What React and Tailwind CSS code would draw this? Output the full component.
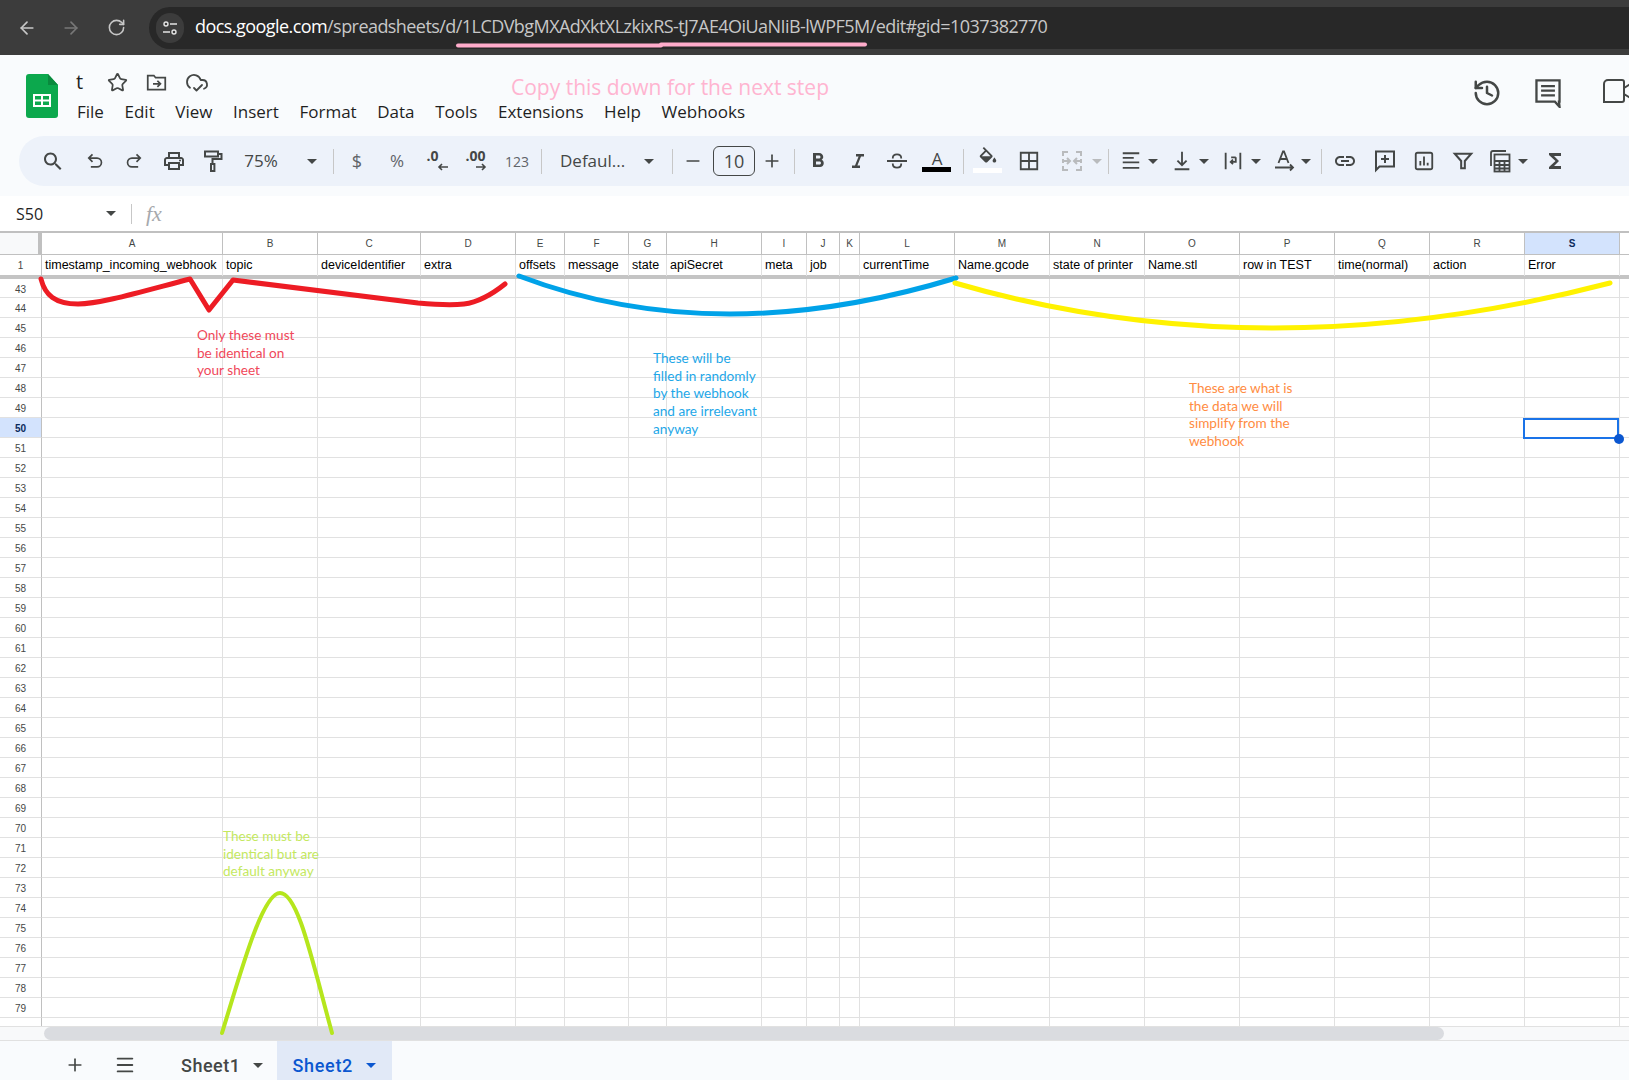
import { ArrowLeft, ArrowRight, RotateCw, Star, CloudCheck, History, Plus, Minus, Menu } from 'lucide-react';

const COLS = ['A', 'B', 'C', 'D', 'E', 'F', 'G', 'H', 'I', 'J', 'K', 'L', 'M', 'N', 'O', 'P', 'Q', 'R', 'S'];
const HEADS = ['timestamp_incoming_webhook', 'topic', 'deviceIdentifier', 'extra', 'offsets', 'message', 'state', 'apiSecret', 'meta', 'job', '', 'currentTime', 'Name.gcode', 'state of printer', 'Name.stl', 'row in TEST', 'time(normal)', 'action', 'Error'];
const ROWS = Array.from({ length: 38 }, (_, i) => i + 43);
const MENU = ['File', 'Edit', 'View', 'Insert', 'Format', 'Data', 'Tools', 'Extensions', 'Help', 'Webhooks'];

// column edges come straight off the sheet, last track is the cut-off column T
const GRID = 'grid grid-cols-[42px_181px_95px_103px_95px_49px_64px_38px_95px_45px_33px_20px_95px_95px_95px_95px_95px_95px_95px_95px_9px]';
const ICON = '#444746';

function Glyph({ children, size = 24, vb = '0 0 24 24', color = ICON }) {
  return (
    <svg width={size} height={size} viewBox={vb} fill={color}>
      {children}
    </svg>
  );
}

function Line({ children, size = 24, width = 2, color = ICON }) {
  return (
    <svg width={size} height={size} viewBox="0 0 24 24" fill="none" stroke={color} strokeWidth={width}>
      {children}
    </svg>
  );
}

function Caret({ className = '', color = '#444746' }) {
  return (
    <div className={`flex w-[10px] shrink-0 justify-center ${className}`}>
      <svg width="10" height="5" viewBox="0 0 10 5" fill={color}>
        <path d="M0 0h10L5 5z" />
      </svg>
    </div>
  );
}

function Sep({ className = '' }) {
  return <div className={`h-[25px] w-px shrink-0 bg-[#c7c7c7] ${className}`} />;
}

function Box({ children, className = '' }) {
  return <div className={`flex h-6 w-6 shrink-0 items-center justify-center ${className}`}>{children}</div>;
}

function Toolbar() {
  return (
    <div className="ml-[19px] mt-[9px] flex h-[50px] items-center rounded-l-[25px] bg-[#edf2fa] pl-[22px] text-[#444746]">
      <Box>
        <Glyph size={25}>
          <path d="M15.5 14h-.79l-.28-.27C15.41 12.59 16 11.11 16 9.5 16 5.91 13.09 3 9.5 3S3 5.91 3 9.5 5.91 16 9.5 16c1.61 0 3.09-.59 4.23-1.57l.27.28v.79l5 4.99L20.49 19l-4.99-5zm-6 0C7.01 14 5 11.99 5 9.5S7.01 5 9.5 5 14 7.01 14 9.5 11.99 14 9.5 14z" />
        </Glyph>
      </Box>
      <Box className="ml-[18px]">
        <Line size={20}>
          <path d="M9 4 4.5 8.5 9 13M5 8.5h9.5a4.5 4.5 0 0 1 0 10.5H7" />
        </Line>
      </Box>
      <Box className="ml-[15px]">
        <Line size={20}>
          <path d="M15 4l4.5 4.5L15 13M19 8.5H9.5a5 5 0 0 0 0 10.5H17" />
        </Line>
      </Box>
      <Box className="ml-[16px]">
        <Glyph size={24}>
          <path d="M19 8h-1V3H6v5H5c-1.66 0-3 1.34-3 3v6h4v4h12v-4h4v-6c0-1.66-1.34-3-3-3zM8 5h8v3H8V5zm8 12v2H8v-4h8v2zm2-2v-2H6v2H4v-4c0-.55.45-1 1-1h14c.55 0 1 .45 1 1v4h-2z" />
          <circle cx="18" cy="11.5" r="1" />
        </Glyph>
      </Box>
      <Box className="ml-[15px]">
        <Line size={24}>
          <path d="M4 2.5h13v5H4zM17 5h3.5v5H11.5v5" />
          <rect x="10" y="15" width="3.4" height="7" />
        </Line>
      </Box>
      <div className="ml-[14px] w-[44px] shrink-0 text-center text-[17px] text-[#444746]">75%</div>
      <Caret className="ml-[24px]" />
      <Sep className="ml-[16px]" />
      <Box className="ml-[11px] text-[18px] text-[#5f6368]">$</Box>
      <Box className="ml-[16px] text-[17px] text-[#5f6368]">%</Box>
      <Box className="ml-[16px]">
        <div className="flex flex-col items-start">
          <span className="mt-[-4px] text-[14px] font-bold leading-[15px] text-[#444746]">.0</span>
          <svg className="ml-[10px]" width="11" height="8" viewBox="0 0 11 8" fill="none" stroke={ICON} strokeWidth="1.6">
            <path d="M11 4H2M5 1 2 4l3 3" />
          </svg>
        </div>
      </Box>
      <Box className="ml-[15px]">
        <div className="flex flex-col items-start">
          <span className="mt-[-4px] text-[14px] font-bold leading-[15px] text-[#444746]">.00</span>
          <svg className="ml-[10px]" width="11" height="8" viewBox="0 0 11 8" fill="none" stroke={ICON} strokeWidth="1.6">
            <path d="M0 4h9M6 1l3 3-3 3" />
          </svg>
        </div>
      </Box>
      <Box className="ml-[17px] text-[14px] text-[#5f6368]">123</Box>
      <Sep className="ml-[12px]" />
      <div className="ml-[18px] w-[68px] shrink-0 whitespace-nowrap text-[17px] text-[#444746]">Defaul...</div>
      <Caret className="ml-[16px]" />
      <Sep className="ml-[18px]" />
      <Box className="ml-[8px]">
        <Minus size={20} strokeWidth={2} color={ICON} />
      </Box>
      <div className="ml-[8px] flex h-[30px] w-[42px] shrink-0 items-center justify-center rounded-[6px] border border-[#444746] text-[18px] text-[#444746]">10</div>
      <Box className="ml-[5px]">
        <Plus size={20} strokeWidth={2} color={ICON} />
      </Box>
      <Sep className="ml-[10px]" />
      <Box className="ml-[11px]">
        <Glyph size={24}>
          <path d="M15.6 10.79c.97-.67 1.65-1.77 1.65-2.79 0-2.26-1.75-4-4-4H7v14h7.04c2.09 0 3.71-1.7 3.71-3.79 0-1.52-.86-2.82-2.15-3.42zM10 6.5h3c.83 0 1.5.67 1.5 1.5s-.67 1.5-1.5 1.5h-3v-3zm3.5 9H10v-3h3.5c.83 0 1.5.67 1.5 1.5s-.67 1.5-1.5 1.5z" />
        </Glyph>
      </Box>
      <Box className="ml-[16px]">
        <Glyph size={24}>
          <path d="M10 5v2.4h2.6l-3.6 9.2H6V19h8v-2.4h-2.6l3.6-9.2H18V5z" />
        </Glyph>
      </Box>
      <Box className="ml-[15px]">
        <Line size={24} width={1.8}>
          <path d="M2 12h20M7.8 9.5V9c0-2.5 2-3.6 4.2-3.6s4.2 1.1 4.2 3.6v.5M7.8 14.5v.5c0 2.5 2 3.6 4.2 3.6s4.2-1.1 4.2-3.6v-.5" />
        </Line>
      </Box>
      <Box className="relative ml-[16px]">
        <span className="mt-[-5px] text-[17px] leading-none text-[#444746]">A</span>
        <div className="absolute left-[-3px] top-[18px] h-[5px] w-[29px] bg-black" />
      </Box>
      <Sep className="ml-[14px]" />
      <Box className="relative ml-[12px]">
        <div className="mt-[-6px]">
          <Glyph size={22}>
            <path d="M16.56 8.94 7.62 0 6.21 1.41l2.38 2.38-5.15 5.15c-.59.59-.59 1.54 0 2.12l5.5 5.5c.59.59 1.53.59 2.12 0l5.5-5.5c.59-.58.59-1.53 0-2.12z" />
            <path d="M10 5.21 5.21 10h9.58z" fill="#edf2fa" />
            <path d="M19 11.5s-2 2.17-2 3.5c0 1.1.9 2 2 2s2-.9 2-2c0-1.33-2-3.5-2-3.5z" />
          </Glyph>
        </div>
        <div className="absolute left-[-3px] top-[19px] h-[5px] w-[29px] bg-white" />
      </Box>
      <Box className="ml-[17px]">
        <Line size={22}>
          <path d="M3 3h18v18H3zM12 3v18M3 12h18" />
        </Line>
      </Box>
      <Box className="ml-[19px]">
        <Line size={24} width={2} color="#b9bbbd">
          <path d="M8 3H3v4M16 3h5v4M8 21H3v-4M16 21h5v-4M3 10v4M21 10v4M2 12h7M7 9l3 3-3 3M22 12h-7M17 9l-3 3 3 3" />
        </Line>
      </Box>
      <Caret className="ml-[8px]" color="#b9bbbd" />
      <Sep className="ml-[6px]" />
      <Box className="ml-[10px]">
        <Line size={22}>
          <path d="M3 3.5h18M3 8.5h12M3 13.5h18M3 19.5h18" />
        </Line>
      </Box>
      <Caret className="ml-[5px]" />
      <Box className="ml-[12px]">
        <Line size={22}>
          <path d="M12 2v14M7 11.5l5 5 5-5M4 21h16" />
        </Line>
      </Box>
      <Caret className="ml-[5px]" />
      <Box className="ml-[12px]">
        <Line size={22}>
          <path d="M4 3v18M20 3v18M15 8h-5M15 8v5h-5M12 10.5l-2.5 2.5 2.5 2.5" />
        </Line>
      </Box>
      <Caret className="ml-[6px]" />
      <Box className="ml-[11px]">
        <Line size={24} width={1.8}>
          <path d="M6.5 14 11 2.5h1L16.5 14M8 10h7M3 18.5h18M18 15.5l3 3-3 3" />
        </Line>
      </Box>
      <Caret className="ml-[5px]" />
      <Sep className="ml-[10px]" />
      <Box className="ml-[11px]">
        <Glyph size={24}>
          <path d="M3.9 12c0-1.71 1.39-3.1 3.1-3.1h4V7H7c-2.76 0-5 2.24-5 5s2.24 5 5 5h4v-1.9H7c-1.71 0-3.1-1.39-3.1-3.1zM8 13h8v-2H8v2zm9-6h-4v1.9h4c1.71 0 3.1 1.39 3.1 3.1s-1.39 3.1-3.1 3.1h-4V17h4c2.76 0 5-2.24 5-5s-2.24-5-5-5z" />
        </Glyph>
      </Box>
      <Box className="ml-[16px]">
        <Line size={24}>
          <path d="M3 2.5h18v15H6.5L3 21zM12 6v8M8 10h8" />
        </Line>
      </Box>
      <Box className="ml-[15px]">
        <Line size={22}>
          <rect x="3" y="3" width="18" height="18" rx="2" />
          <path d="M8 17v-5M12 17V7M16 17v-3" />
        </Line>
      </Box>
      <Box className="ml-[15px]">
        <Line size={22} width={2.2}>
          <path d="M3 4h18l-7 8v8h-4v-8z" />
        </Line>
      </Box>
      <Box className="ml-[13px]">
        <Line size={24} width={1.8}>
          <path d="M3 17V4q0-2 2-2h13" />
          <rect x="6.5" y="5.5" width="15" height="17" />
          <path d="M6.5 12h15M6.5 16h15M6.5 19.5h15M11.5 12v10M16.5 12v10" />
        </Line>
      </Box>
      <Caret className="ml-[6px]" />
      <Box className="ml-[15px]">
        <Glyph size={24}>
          <path d="M18 4H6v2l6.5 6L6 18v2h12v-3h-7l5-5-5-5h7z" />
        </Glyph>
      </Box>
    </div>
  );
}

function Browser() {
  return (
    <div className="flex h-[55px] shrink-0 items-center bg-[#3c3c3c] pl-[17px]">
      <ArrowLeft size={20} color="#c7c7c7" strokeWidth={2} />
      <ArrowRight size={20} color="#777" strokeWidth={2} className="ml-[24px]" />
      <RotateCw size={19} color="#c7c7c7" strokeWidth={2} className="ml-[26px]" />
      <div className="ml-[23px] flex h-[42px] flex-1 items-center rounded-l-[21px] bg-[#282828] pl-[7px]">
        <div className="flex h-[30px] w-[28px] items-center justify-center rounded-full bg-[#3c3c3c]">
          <svg width="16" height="16" viewBox="0 0 16 16" fill="none" stroke="#e3e3e3" strokeWidth="1.4">
            <circle cx="4" cy="4" r="2" />
            <path d="M8 4h7M1 12h7" />
            <circle cx="12" cy="12" r="2" />
          </svg>
        </div>
        <div className="ml-[11px] mt-[-2px] whitespace-nowrap text-[18px] tracking-[-0.56px] text-[#c7c7c7]">
          <span className="text-white">docs.google.com</span>/spreadsheets/d/1LCDVbgMXAdXktXLzkixRS-tJ7AE4OiUaNIiB-lWPF5M/edit#gid=1037382770
        </div>
      </div>
    </div>
  );
}

function Header() {
  return (
    <div className="h-[141px] shrink-0 bg-[#f9fbfd]">
      <div className="flex h-[72px] items-start">
        <svg className="ml-[26px] mt-[19px] shrink-0" width="32" height="44" viewBox="0 0 32 44">
          <path d="M3 0h19l10 11v30a3 3 0 0 1-3 3H3a3 3 0 0 1-3-3V3a3 3 0 0 1 3-3z" fill="#0ca84d" />
          <path d="M22 0l10 11H22z" fill="#0a8a3e" />
          <path d="M7 20h18v13H7z" fill="#fff" />
          <path d="M9 22h6v3.5H9zM17 22h6v3.5h-6zM9 27.5h6V31H9zM17 27.5h6V31h-6z" fill="#0ca84d" />
        </svg>
        <div className="ml-[18px] flex min-w-0 flex-col">
          <div className="mt-[12px] flex h-[30px] items-center">
            <span className="w-[31px] text-[20px] leading-none text-[#1f1f1f]">t</span>
            <Star size={21} color={ICON} strokeWidth={2} />
            <svg className="ml-[18px]" width="21" height="21" viewBox="0 0 24 24" fill="none" stroke={ICON} strokeWidth="2">
              <path d="M2 4h7l2 2.5h11V20H2zM8 13.5h8M13 10l3.5 3.5L13 17" />
            </svg>
            <CloudCheck className="ml-[18px]" size={24} color={ICON} strokeWidth={1.8} />
          </div>
          <div className="ml-px flex h-[30px] items-center gap-[20.6px] whitespace-nowrap text-[17px] text-[#1f1f1f]">
            {MENU.map((m) => (
              <span key={m}>{m}</span>
            ))}
          </div>
        </div>
        <div className="flex flex-1 justify-end overflow-hidden pt-[23px]">
          <History size={30} color={ICON} strokeWidth={2} className="mr-[32px]" />
          <svg className="mr-[39px]" width="28" height="30" viewBox="0 0 24 26" fill="none" stroke={ICON} strokeWidth="2">
            <path d="M2 2h20v18.5h-.5L22 25l-4-4.5H2zM6 7h12M6 11h12M6 15h12" />
          </svg>
          <svg className="mr-[-4px] shrink-0" width="32" height="26" viewBox="0 0 32 26" fill="none" stroke={ICON} strokeWidth="2">
            <path d="M7 2h14a2 2 0 0 1 2 2v18a2 2 0 0 1-2 2H3V6a4 4 0 0 1 4-4zM23 10l8-5v16l-8-5z" />
          </svg>
        </div>
      </div>
      <Toolbar />
    </div>
  );
}

function FormulaBar() {
  return (
    <div className="flex h-[35px] shrink-0 items-center bg-white pl-[16px]">
      <span className="w-[90px] text-[16px] text-[#1f1f1f]">S50</span>
      <Caret />
      <div className="ml-[15px] h-[20px] w-px bg-[#c7c7c7]" />
      <span className="ml-[14px] font-['Liberation_Serif',serif] text-[22px] italic text-[#a6a9ad]">fx</span>
    </div>
  );
}

function Grid() {
  return (
    <div className="h-[795px] shrink-0 overflow-hidden bg-white font-['Liberation_Sans',sans-serif]">
      <div className={`${GRID} h-[24px] border-t-2 border-[#c0c0c0]`}>
        <div className="border-b border-r-[4px] border-[#c0c0c0] bg-[#f8f9fa]" />
        {COLS.map((c) => (
          <div key={c} className={`flex items-center justify-center border-b border-r border-[#c0c0c0] text-[10px] ${c === 'S' ? 'bg-[#d3e3fd] font-semibold text-[#0b2a5b]' : 'text-[#444746]'}`}>
            {c}
          </div>
        ))}
        <div className="border-b border-[#c0c0c0]" />
      </div>
      <div className={`${GRID} h-[20px]`}>
        <div className="flex items-center justify-center border-r border-[#c0c0c0] text-[10px] text-[#444746]">1</div>
        {HEADS.map((h, i) => (
          <div key={COLS[i]} className="whitespace-nowrap border-r border-[#e1e1e1] pl-[3px] text-[12.5px] leading-[21px] text-black">
            {h}
          </div>
        ))}
      </div>
      <div className="h-[4px] bg-[#c4c4c4]" />
      {ROWS.map((r) => (
        <div key={r} className={`${GRID} ${r === 43 ? 'h-[19px]' : 'h-[20px]'}`}>
          <div className={`flex items-center justify-center border-b border-r border-b-[#e1e1e1] border-r-[#c0c0c0] pt-[2px] text-[10px] ${r === 50 ? 'bg-[#d3e3fd] font-bold text-[#0b2a5b]' : 'text-[#444746]'}`}>
            {r < 80 ? r : ''}
          </div>
          {COLS.map((c) => (
            <div key={c} className="border-b border-r border-[#e1e1e1]" />
          ))}
          <div className="border-b border-[#e1e1e1]" />
        </div>
      ))}
    </div>
  );
}

function Tabs() {
  return (
    <>
      <div className="flex h-[15px] shrink-0 items-center border-y border-[#e1e1e1] bg-[#f8f9fa] pl-[44px]">
        <div className="h-[13px] w-[1400px] rounded-full bg-[#dadce0]" />
      </div>
      <div className="flex h-[39px] shrink-0 items-stretch bg-[#f9fbfd] font-['Roboto',sans-serif]">
        <div className="ml-[65px] flex items-center pt-[8px]">
          <Plus size={20} color={ICON} strokeWidth={2} />
        </div>
        <div className="ml-[29px] flex items-center pt-[8px]">
          <Menu size={22} color={ICON} strokeWidth={2} />
        </div>
        <div className="ml-[45px] flex items-center pt-[9px] text-[18px] font-medium tracking-[0.5px] text-[#444746]">Sheet1</div>
        <div className="ml-[13px] flex items-center pt-[9px]">
          <Caret />
        </div>
        <div className="ml-[14px] flex w-[115px] items-center bg-[#e1e9f7] pl-[15px] pt-[9px] text-[18px] font-medium tracking-[0.7px] text-[#0b57d0]">
          Sheet2
          <Caret className="ml-[13px]" color="#0b57d0" />
        </div>
      </div>
    </>
  );
}

// Marker strokes and notes someone painted over the screenshot
function Scribbles() {
  return (
    <div className="pointer-events-none absolute inset-0 font-['Lato',sans-serif] text-[13.6px] leading-[17.7px]">
      <svg className="absolute inset-0" width="1629" height="1080" fill="none" strokeWidth="5" strokeLinecap="round" strokeLinejoin="round">
        <path d="M458 45.5H661" stroke="#ffaccb" strokeWidth="4" />
        <path d="M661 44.5H865" stroke="#ffaccb" strokeWidth="4" />
        <path d="M41 279C45 295 55 304 78 304C100 304 140 292 190 279L209 310L233 280L418 303C440 305 455 305 464 304C480 302 495 292 505 284" stroke="#ed1c24" />
        <path d="M519 276Q716 351 956 278" stroke="#00a2e8" />
        <path d="M955 283Q1264 373 1610 283" stroke="#fff200" />
        <path d="M222 1033C240 975 262 893 280 893C298 893 312 960 332 1033" stroke="#b5e61d" strokeWidth="4" />
      </svg>
      <div className="absolute left-[511px] top-[72px] whitespace-nowrap font-['Open_Sans',sans-serif] text-[21px] leading-[30px] text-[#ffb4d0]">Copy this down for the next step</div>
      <div className="absolute left-[197px] top-[327px] text-[#f0485a]">
        Only these must
        <br />
        be identical on
        <br />
        your sheet
      </div>
      <div className="absolute left-[653px] top-[350px] text-[#1ea7e8]">
        These will be
        <br />
        filled in randomly
        <br />
        by the webhook
        <br />
        and are irrelevant
        <br />
        anyway
      </div>
      <div className="absolute left-[1189px] top-[380px] text-[#ff8c42]">
        These are what is
        <br />
        the data we will
        <br />
        simplify from the
        <br />
        webhook
      </div>
      <div className="absolute left-[223px] top-[828px] text-[#c4e85f]">
        These must be
        <br />
        identical but are
        <br />
        default anyway
      </div>
      {/* selected cell S50 */}
      <div className="absolute left-[1523px] top-[418px] h-[21px] w-[96px] border-2 border-[#1a73e8]" />
      <div className="absolute left-[1614px] top-[434px] h-[10px] w-[10px] rounded-full bg-[#0b57d0]" />
    </div>
  );
}

export default function App() {
  return (
    <div className="relative flex h-[1080px] w-[1629px] flex-col overflow-hidden bg-white font-['Open_Sans',sans-serif]">
      <Browser />
      <Header />
      <FormulaBar />
      <Grid />
      <Tabs />
      <Scribbles />
    </div>
  );
}
